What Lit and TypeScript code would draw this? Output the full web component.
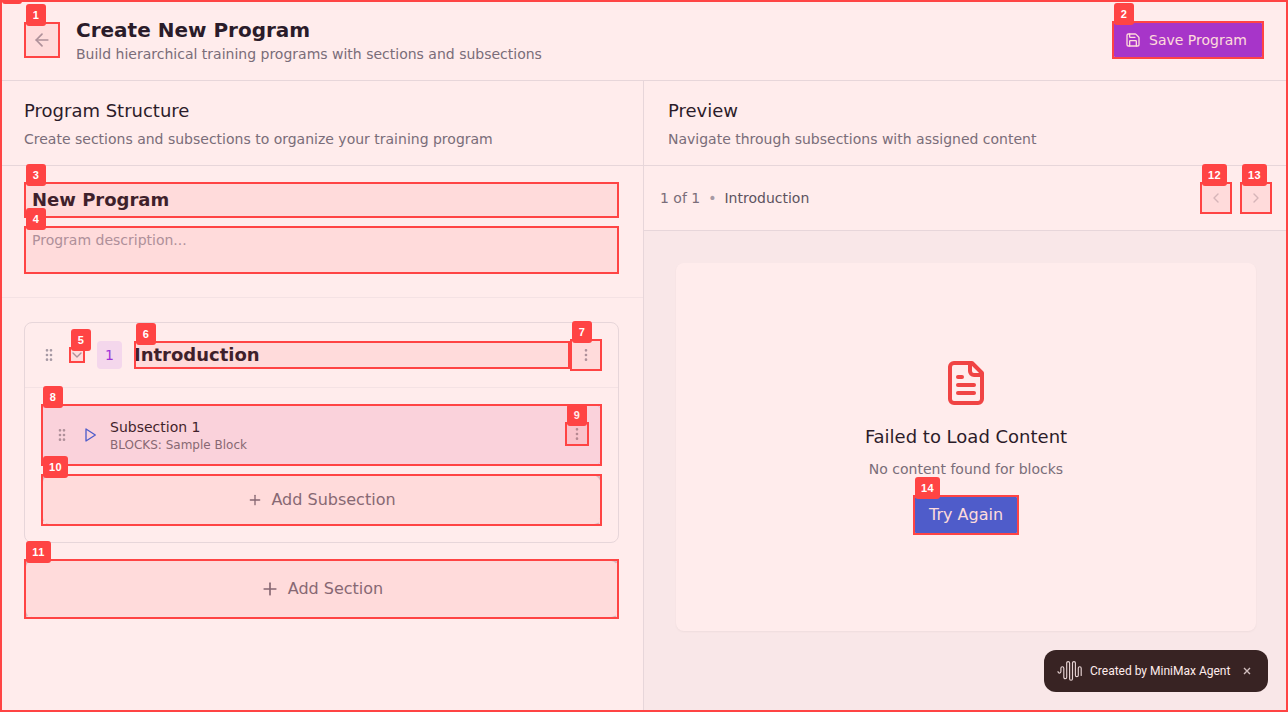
import { LitElement, html, css, svg } from "lit";
import { customElement } from "lit/decorators.js";

const icon = (size: number, body: unknown, cls = "") => html`
  <svg class="icon ${cls}" width=${size} height=${size} viewBox="0 0 24 24">${body}</svg>
`;

const arrowLeft = svg`<path d="m12 19-7-7 7-7"/><path d="M19 12H5"/>`;
const save = svg`<path d="M15.2 3a2 2 0 0 1 1.4.6l3.8 3.8a2 2 0 0 1 .6 1.4V19a2 2 0 0 1-2 2H5a2 2 0 0 1-2-2V5a2 2 0 0 1 2-2z"/><path d="M17 21v-7a1 1 0 0 0-1-1H8a1 1 0 0 0-1 1v7"/><path d="M7 3v4a1 1 0 0 0 1 1h7"/>`;
const grip = svg`<circle cx="9" cy="12" r="1"/><circle cx="9" cy="5" r="1"/><circle cx="9" cy="19" r="1"/><circle cx="15" cy="12" r="1"/><circle cx="15" cy="5" r="1"/><circle cx="15" cy="19" r="1"/>`;
const more = svg`<circle cx="12" cy="12" r="1"/><circle cx="12" cy="5" r="1"/><circle cx="12" cy="19" r="1"/>`;
const chevronDown = svg`<path d="m6 9 6 6 6-6"/>`;
const chevronLeft = svg`<path d="m15 18-6-6 6-6"/>`;
const chevronRight = svg`<path d="m9 18 6-6-6-6"/>`;
const play = svg`<polygon points="6 3 20 12 6 21 6 3"/>`;
const plus = svg`<path d="M5 12h14"/><path d="M12 5v14"/>`;
const fileText = svg`<path d="M15 2H6a2 2 0 0 0-2 2v16a2 2 0 0 0 2 2h12a2 2 0 0 0 2-2V7Z"/><path d="M14 2v4a2 2 0 0 0 2 2h4"/><path d="M10 9H8"/><path d="M16 13H8"/><path d="M16 17H8"/>`;

const mark = (n: number) => html`<span class="mark"><b class="tag ${n > 9 ? "wide" : ""}">${n}</b></span>`;

@customElement("app-root")
export class AppRoot extends LitElement {
  static styles = css`
    :host {
      display: block;
      height: 712px;
      font-family: "DejaVu Sans", sans-serif;
      color: #111827;
    }
    * { box-sizing: border-box; }
    .page {
      position: relative;
      height: 712px;
      display: flex;
      flex-direction: column;
      background: #fff;
      overflow: hidden;
    }
    .icon {
      display: block;
      flex: none;
      fill: none;
      stroke: currentColor;
      stroke-width: 2;
      stroke-linecap: round;
      stroke-linejoin: round;
    }
    .marked { position: relative; }
    .mark {
      position: absolute;
      inset: 0;
      z-index: 3;
      border: 2px solid #ff4444;
      background: rgba(255, 68, 68, 0.1);
      pointer-events: none;
    }
    .mark.root { z-index: 2; }
    .tag {
      position: absolute;
      left: 0;
      top: -20px;
      width: 20px;
      height: 22px;
      border-radius: 3px;
      background: #ff4444;
      color: #fff;
      font: bold 11px/22px "Liberation Sans", sans-serif;
      letter-spacing: 0.5px;
      text-align: center;
    }
    .tag.wide { width: 25px; }
    .header {
      display: flex;
      align-items: center;
      gap: 16px;
      padding: 16px 24px;
      height: 81px;
      border-bottom: 1px solid #e5e7eb;
    }
    .back { padding: 8px; color: #9ca3af; }
    .titles { flex: 1; }
    .title { font-size: 20px; line-height: 28px; font-weight: 700; }
    .sub { font-size: 14px; line-height: 20px; color: #6b7280; }
    .save {
      display: flex;
      align-items: center;
      gap: 8px;
      width: 152px;
      height: 38px;
      padding-left: 13px;
      border-radius: 8px;
      background: #9333ea;
      color: #fff;
      font-size: 14px;
      white-space: nowrap;
    }
    .body { flex: 1; display: flex; min-height: 0; }
    .left { width: 644px; border-right: 1px solid #e5e7eb; }
    .right { flex: 1; display: flex; flex-direction: column; }
    .head { padding: 16px 24px; height: 85px; border-bottom: 1px solid #e5e7eb; }
    .head-title { font-size: 18px; line-height: 28px; margin-bottom: 4px; }
    .meta {
      display: flex;
      flex-direction: column;
      gap: 8px;
      padding: 16px 24px 23px;
      border-bottom: 1px solid #f3f4f6;
    }
    .name { height: 36px; padding: 4px 8px; font-size: 18px; line-height: 28px; font-weight: 700; }
    .desc { height: 48px; padding: 4px 8px; font-size: 14px; line-height: 20px; color: #9ca3af; }
    .sections { display: flex; flex-direction: column; gap: 16px; padding: 24px; }
    .card { border: 1px solid #e5e7eb; border-radius: 8px; }
    .card-head {
      display: flex;
      align-items: center;
      height: 65px;
      padding: 0 16px;
      border-bottom: 1px solid #f3f4f6;
      color: #9ca3af;
    }
    .toggle { margin: 0 12px; }
    .number {
      width: 25px;
      height: 28px;
      border-radius: 4px;
      background: #f3e8ff;
      color: #9333ea;
      font-size: 14px;
      line-height: 28px;
      text-align: center;
    }
    .section-name {
      flex: 1;
      margin-left: 12px;
      height: 28px;
      font-size: 18px;
      line-height: 28px;
      font-weight: 700;
      color: #111827;
    }
    .menu { padding: 8px; color: #9ca3af; }
    .card-body { display: flex; flex-direction: column; gap: 8px; padding: 16px; }
    .item {
      display: flex;
      align-items: center;
      gap: 12px;
      height: 62px;
      padding: 0 12px;
      border: 1px solid #e9d5ff;
      border-radius: 8px;
      background: #faf5ff;
      color: #9ca3af;
    }
    .play { color: #2563eb; }
    .item-text { flex: 1; }
    .item-title { font-size: 14px; line-height: 20px; color: #111827; }
    .item-sub { font-size: 12px; line-height: 16px; color: #6b7280; }
    .menu.small { padding: 4px; margin-bottom: 2px; }
    .add {
      display: flex;
      align-items: center;
      justify-content: center;
      gap: 8px;
      height: 52px;
      border: 2px dashed #d1d5db;
      border-radius: 8px;
      color: #6b7280;
      font-size: 16px;
      line-height: 24px;
    }
    .add.large { height: 60px; }
    .nav {
      display: flex;
      align-items: center;
      gap: 8px;
      height: 65px;
      padding: 0 16px;
      border-bottom: 1px solid #e5e7eb;
      font-size: 14px;
      line-height: 20px;
      color: #6b7280;
    }
    .dot { color: #9ca3af; }
    .current { flex: 1; color: #4b5563; }
    .faded { opacity: 0.5; }
    .stage { flex: 1; padding: 32px 32px 81px; background: #f9fafb; }
    .panel {
      display: flex;
      flex-direction: column;
      align-items: center;
      justify-content: center;
      height: 368px;
      border-radius: 8px;
      background: #fff;
      box-shadow: 0 1px 2px rgba(0, 0, 0, 0.05);
    }
    .error { color: #ef4444; }
    .panel-title { margin: 16px 0 8px; font-size: 18px; line-height: 28px; }
    .retry {
      margin-top: 16px;
      width: 106px;
      height: 40px;
      border-radius: 8px;
      background: #2563eb;
      color: #fff;
      font-size: 16px;
      line-height: 40px;
      text-align: center;
    }
    .credit {
      position: absolute;
      right: 20px;
      bottom: 20px;
      display: flex;
      align-items: center;
      width: 224px;
      height: 42px;
      padding-left: 13px;
      border-radius: 12px;
      background: #222020;
      color: #fff;
      font: 400 12px/16px Roboto, sans-serif;
      white-space: nowrap;
    }
    .credit-text { width: 140px; margin: 0 13px 0 7px; }
    .wave { display: block; flex: none; fill: none; stroke: #fff; stroke-opacity: 0.88; stroke-width: 1.15; stroke-linecap: round; }
    .close { fill: none; stroke: #ccc; stroke-width: 1.4; }
  `;

  render() {
    return html`
      <div class="page">
        <div class="header">
          <div class="back marked">${icon(20, arrowLeft)}${mark(1)}</div>
          <div class="titles">
            <div class="title">Create New Program</div>
            <div class="sub">Build hierarchical training programs with sections and subsections</div>
          </div>
          <div class="save marked">${icon(16, save)}<span>Save Program</span>${mark(2)}</div>
        </div>

        <div class="body">
          <div class="left">
            <div class="head">
              <div class="head-title">Program Structure</div>
              <div class="sub">Create sections and subsections to organize your training program</div>
            </div>
            <div class="meta">
              <div class="name marked">New Program${mark(3)}</div>
              <div class="desc marked">Program description...${mark(4)}</div>
            </div>
            <div class="sections">
              <div class="card">
                <div class="card-head">
                  ${icon(16, grip)}
                  <div class="toggle marked">${icon(16, chevronDown)}${mark(5)}</div>
                  <div class="number">1</div>
                  <div class="section-name marked">Introduction${mark(6)}</div>
                  <div class="menu marked">${icon(16, more)}${mark(7)}</div>
                </div>
                <div class="card-body">
                  <div class="item-wrap marked">
                    <div class="item">
                      ${icon(16, grip)} ${icon(16, play, "play")}
                      <div class="item-text">
                        <div class="item-title">Subsection 1</div>
                        <div class="item-sub">BLOCKS: Sample Block</div>
                      </div>
                      <div class="menu small marked">${icon(16, more)}${mark(9)}</div>
                    </div>
                    ${mark(8)}
                  </div>
                  <div class="add-wrap marked">
                    <div class="add">${icon(16, plus)}<span>Add Subsection</span></div>
                    ${mark(10)}
                  </div>
                </div>
              </div>
              <div class="add-wrap marked">
                <div class="add large">${icon(20, plus)}<span>Add Section</span></div>
                ${mark(11)}
              </div>
            </div>
          </div>

          <div class="right">
            <div class="head">
              <div class="head-title">Preview</div>
              <div class="sub">Navigate through subsections with assigned content</div>
            </div>
            <div class="nav">
              <span>1 of 1</span><span class="dot">•</span><span class="current">Introduction</span>
              <div class="menu marked">${icon(16, chevronLeft, "faded")}${mark(12)}</div>
              <div class="menu marked">${icon(16, chevronRight, "faded")}${mark(13)}</div>
            </div>
            <div class="stage">
              <div class="panel">
                ${icon(48, fileText, "error")}
                <div class="panel-title">Failed to Load Content</div>
                <div class="sub">No content found for blocks</div>
                <div class="retry marked">Try Again${mark(14)}</div>
              </div>
            </div>
          </div>
        </div>

        <div class="credit">
          <svg class="wave" width="26" height="22" viewBox="0 0 26 22">
            <path d="M1 11.6a1.45 1.45 0 0 0 2.9 0V8.2a1.45 1.45 0 0 1 2.9 0V17.2a1.45 1.45 0 0 0 2.9 0V3a1.45 1.45 0 0 1 2.9 0V18.8a1.45 1.45 0 0 0 2.9 0V3a1.45 1.45 0 0 1 2.9 0V15.2a1.45 1.45 0 0 0 2.9 0V8.2a1.45 1.45 0 0 1 2.9 0V15.4"/>
          </svg>
          <span class="credit-text">Created by MiniMax Agent</span>
          <svg class="close" width="8" height="8" viewBox="0 0 8 8"><path d="M1 1l6 6M7 1l-6 6"/></svg>
        </div>

        <span class="mark root"><b class="tag"></b></span>
      </div>
    `;
  }
}
